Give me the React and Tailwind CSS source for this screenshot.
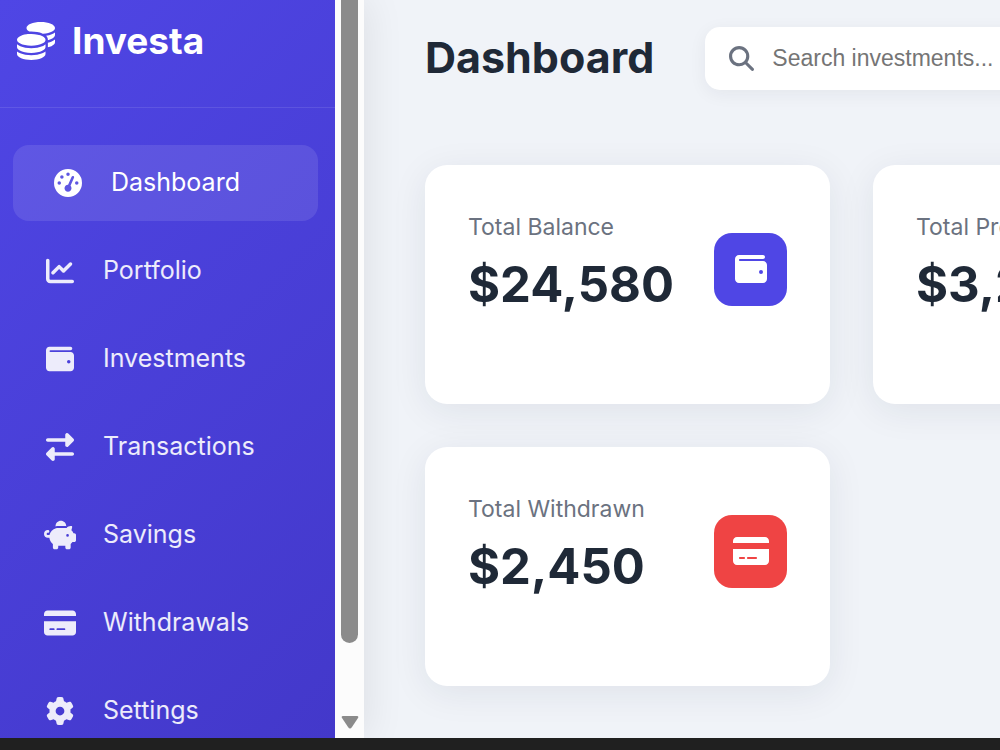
import {
  FaArrowTrendUp,
  FaChartLine,
  FaCoins,
  FaCreditCard,
  FaGaugeHigh,
  FaGear,
  FaMagnifyingGlass,
  FaPiggyBank,
  FaRightLeft,
  FaWallet,
} from "react-icons/fa6";

const links = [
  { label: "Dashboard", Icon: FaGaugeHigh, active: true },
  { label: "Portfolio", Icon: FaChartLine },
  { label: "Investments", Icon: FaWallet },
  { label: "Transactions", Icon: FaRightLeft },
  { label: "Savings", Icon: FaPiggyBank, wide: true },
  { label: "Withdrawals", Icon: FaCreditCard, wide: true },
  { label: "Settings", Icon: FaGear },
];

const stats = [
  { label: "Total Balance", value: "$24,580", Icon: FaWallet, tone: "bg-[#4f46e5]" },
  { label: "Total Profit", value: "$3,240", Icon: FaArrowTrendUp, tone: "bg-[#10b981]", wide: true },
  { label: "Total Withdrawn", value: "$2,450", Icon: FaCreditCard, tone: "bg-[#ef4444]", wide: true },
];

function NavLink({ label, Icon, active, wide }) {
  return (
    <a
      href="#"
      aria-current={active ? "page" : undefined}
      className={`flex h-[76px] shrink-0 items-center gap-[25px] rounded-2xl text-[25px] ${
        active ? "bg-white/10 pl-[36px] text-white" : "pl-7 text-white/90"
      }`}
    >
      <span className="flex w-[37px] justify-center">
        <Icon className={wide ? "size-8" : "size-7"} />
      </span>
      {label}
    </a>
  );
}

function Sidebar() {
  return (
    <aside className="flex shrink-0 shadow-[4px_0_36px_rgba(0,0,0,0.08)]">
      <div className="w-[335px] overflow-hidden bg-[linear-gradient(135deg,#4f46e5_0%,#4338ca_100%)]">
        <div className="flex h-[108px] items-start gap-[17px] border-b border-white/10 pt-[18px] pl-[17px] text-white">
          <FaCoins className="mt-[4px] size-[38px]" />
          <span className="text-[37px] leading-[46px] font-bold">Investa</span>
        </div>
        <nav aria-label="Main" className="flex flex-col gap-3 pt-[37px] pr-[17px] pl-[13px]">
          {links.map((link) => (
            <NavLink key={link.label} {...link} />
          ))}
        </nav>
      </div>
      <div aria-hidden="true" className="flex w-[29px] flex-col items-center justify-between bg-[#fcfcfc] pb-[9px]">
        <div className="h-[643px] w-[17px] rounded-t-lg rounded-b-full bg-[#8b8b8b]" />
        <svg viewBox="0 0 18 14" className="h-[14px] w-[18px]">
          <path d="M2 1h14q2 0 1 2l-6 9q-2 3-4 0L1 3Q0 1 2 1z" fill="#8b8b8b" />
        </svg>
      </div>
    </aside>
  );
}

function StatCard({ label, value, Icon, tone, wide }) {
  return (
    <section className="h-[239px] rounded-[22px] bg-white px-[43px] pt-[46px] shadow-[0_7px_36px_rgba(30,41,59,0.08)]">
      <div className="flex items-center justify-between">
        <div>
          <h2 className="text-[23px] leading-8 text-[#6b7280]">{label}</h2>
          <p className="text-[49px] leading-[84px] font-bold text-[#1f2937]">{value}</p>
        </div>
        <span className={`flex size-[73px] items-center justify-center rounded-[18px] text-white ${tone}`}>
          <Icon className={wide ? "size-9" : "size-8"} />
        </span>
      </div>
    </section>
  );
}

export default function App() {
  return (
    <div className="flex h-screen flex-col overflow-hidden bg-[#f0f3f8] font-['Inter',sans-serif]">
      <div className="flex min-h-0 flex-1">
        <Sidebar />
        <main className="min-w-0 flex-1 overflow-hidden pt-[27px] pl-[61px]">
          <header className="flex items-start gap-[51px]">
            <h1 className="text-[43px] leading-[60px] font-bold text-[#1f2937]">Dashboard</h1>
            <label className="flex h-[63px] w-[560px] shrink-0 items-center gap-[18px] rounded-[15px] bg-white pl-6 shadow-[0_4px_18px_rgba(30,41,59,0.06)]">
              <FaMagnifyingGlass className="size-[25px] shrink-0 text-[#6b7280]" />
              <span className="sr-only">Search investments</span>
              <input
                type="search"
                placeholder="Search investments..."
                className="min-w-0 flex-1 bg-transparent font-['Liberation_Sans',Arial,sans-serif] text-[23px] text-[#1f2937] outline-none placeholder:text-[#757575]"
              />
            </label>
          </header>
          <div className="grid grid-cols-[repeat(2,405px)] gap-[43px] pt-[75px]">
            {stats.map((stat) => (
              <StatCard key={stat.label} {...stat} />
            ))}
          </div>
        </main>
      </div>
      <div aria-hidden="true" className="h-3 shrink-0 bg-[#202020]" />
    </div>
  );
}
